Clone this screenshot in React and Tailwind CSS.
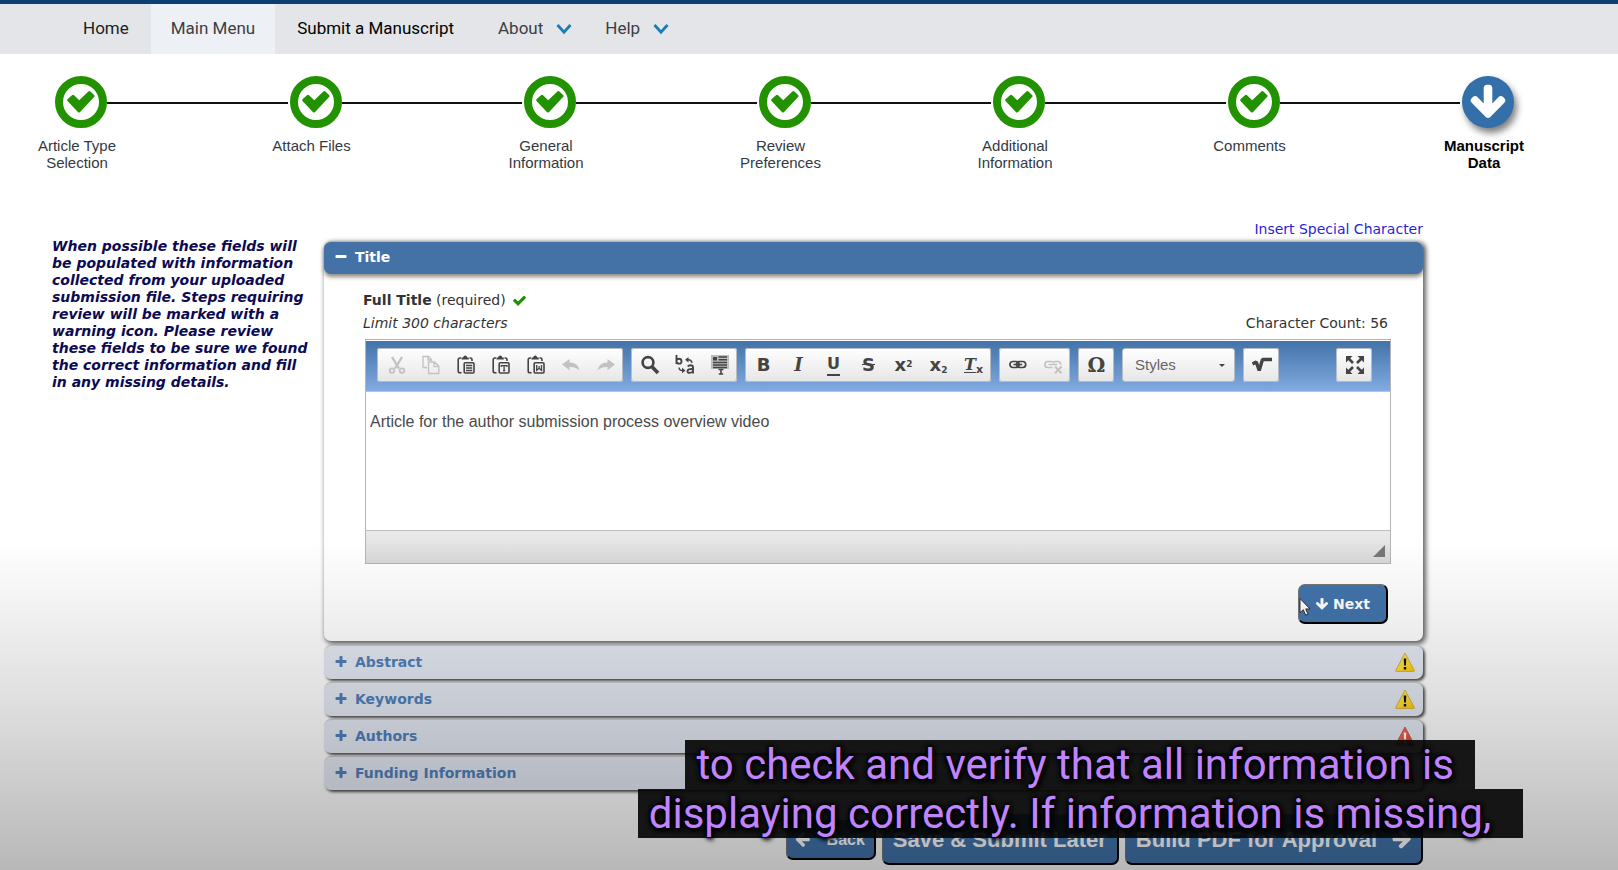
import React from "react";

const CHECK =
  "M1671 566q0 40-28 68l-724 724-136 136q-28 28-68 28t-68-28l-136-136-362-362q-28-28-28-68t28-68l136-136q28-28 68-28t68 28l294 295 656-657q28-28 68-28t68 28l136 136q28 28 28 68z";
const ARROW =
  "M1675 832q0 53-37 90l-651 652q-39 37-91 37-53 0-90-37l-651-652q-38-36-38-90 0-53 38-91l74-75q39-37 91-37 53 0 90 37l294 294v-704q0-52 38-90t90-38h128q52 0 90 38t38 90v704l294-294q37-37 90-37 52 0 91 37l75 75q37 39 37 91z";
const PLUS =
  "M1600 736v192q0 40-28 68t-68 28h-416v416q0 40-28 68t-68 28h-192q-40 0-68-28t-28-68v-416h-416q-40 0-68-28t-28-68v-192q0-40 28-68t68-28h416v-416q0-40 28-68t68-28h192q40 0 68 28t28 68v416h416q40 0 68 28t28 68z";
const MINUS =
  "M1600 736v192q0 40-28 68t-68 28h-1216q-40 0-68-28t-28-68v-192q0-40 28-68t68-28h1216q40 0 68 28t28 68z";

function Glyph({ d, className }) {
  return (
    <svg viewBox="0 0 1792 1792" fill="currentColor" className={className} aria-hidden="true">
      <path d={d} />
    </svg>
  );
}

const steps = [
  ["Article Type", "Selection"],
  ["Attach Files"],
  ["General", "Information"],
  ["Review", "Preferences"],
  ["Additional", "Information"],
  ["Comments"],
  ["Manuscript", "Data"],
];

function Chevron() {
  return (
    <svg viewBox="0 0 16 12" className="h-3 w-4" fill="none" stroke="#1a7bb5" strokeWidth="2.8" aria-hidden="true">
      <path d="M1.5 2 8 9.2 14.5 2" />
    </svg>
  );
}

function Nav() {
  return (
    <nav className="flex h-[54px] items-stretch border-t-4 border-[#0b3f73] bg-[#e3e5e8] pl-[59px] font-['Roboto',sans-serif] text-[17px] text-[#26282b]">
      <a href="#home" className="flex items-center pr-[22px] pl-6 text-[#1c1d1f]">Home</a>
      <a href="#main" className="flex items-center bg-[#edf1f5] px-5 text-[#3c3e42]">Main Menu</a>
      <a href="#submit" className="flex items-center px-[22px] text-black">Submit a Manuscript</a>
      <a href="#about" className="flex items-center gap-[13px] px-[22px] text-[#3c3e42]">About <Chevron /></a>
      <a href="#help" className="flex items-center gap-[13px] pl-[11px] text-[#3c3e42]">Help <Chevron /></a>
    </nav>
  );
}

function Stepper() {
  return (
    <ol className="flex pt-[22px] pr-[104px] pl-[55px]">
      {steps.map((lines, i) => {
        const current = i === steps.length - 1;
        return (
          <li key={lines[0]} className={current ? "w-[52px] flex-none" : "min-w-0 flex-1"}>
            <div className="flex items-center">
              {current ? (
                <span className="flex size-[52px] flex-none items-center justify-center rounded-full bg-[#336fa8] text-white shadow-[3px_5px_7px_rgba(0,0,0,0.5)]">
                  <Glyph d={ARROW} className="size-10" />
                </span>
              ) : (
                <span className="flex size-[52px] flex-none items-center justify-center rounded-full border-8 border-[#229200] text-[#229200]">
                  <svg viewBox="0 0 28 22" className="h-[22px] w-7 flex-none" fill="currentColor" stroke="currentColor" strokeWidth="3" strokeLinejoin="round" aria-hidden="true">
                    <path d="M6 5.300 1.800 9.200 12 20 26 5 22.400 1.600 12.200 11.400Z" />
                  </svg>
                </span>
              )}
              {!current && <span className="mt-[2px] mr-[2px] h-[2px] flex-1 bg-[#111]" />}
            </div>
            <p
              className={`mt-[9px] -ml-[38px] h-[34px] w-[120px] text-center font-['Liberation_Sans',sans-serif] text-[15px] leading-[17px] ${
                current ? "font-bold text-black" : "text-[#333a44]"
              }`}
            >
              {lines.map((l) => (
                <span key={l} className="block">{l}</span>
              ))}
            </p>
          </li>
        );
      })}
    </ol>
  );
}

/* ---------- toolbar icons ---------- */

function Icon({ children, dim }) {
  return (
    <svg viewBox="0 0 20 20" className={`size-5 ${dim ? "text-[#c2c2c2]" : "text-[#444]"}`} fill="none" stroke="currentColor" strokeWidth="1.6" aria-hidden="true">
      {children}
    </svg>
  );
}

function Clipboard({ children }) {
  return (
    <Icon>
      <path d="M5 3H4Q2.200 3 2.200 5V16Q2.200 17.800 4 17.800H5.500M13.500 3H14.500Q16 3 16 5V6" />
      <path d="M5.500 4.500V2.500H7.200Q7.400.6 9.200.6T11.200 2.500H12.800V4.500Z" fill="currentColor" stroke="none" />
      <rect x="8.200" y="7.800" width="9.800" height="10.200" rx="1" />
      {children}
    </Icon>
  );
}

const Cut = () => (
  <Icon dim>
    <path d="M6 2 13 13.500M16 2 9 13.500" strokeWidth="2.400" />
    <circle cx="6" cy="15.600" r="2.300" strokeWidth="1.800" />
    <circle cx="16" cy="15.600" r="2.300" strokeWidth="1.800" />
  </Icon>
);
const Copy = () => (
  <Icon dim>
    <path d="M6 12.500H2V1.500H7.500L10.500 4.500V6M7 1.500V5H10" strokeWidth="1.300" />
    <path d="M7.500 7H13.500L17.800 11V18.500H7.500ZM13 7V11.500H17.500" strokeWidth="1.300" />
  </Icon>
);
const Paste = () => (
  <Clipboard>
    <path d="M10 10.500H16.200M10 13H16.200M10 15.500H16.200" strokeWidth="1.300" />
  </Clipboard>
);
const PasteText = () => (
  <Clipboard>
    <path d="M10.300 11.900V10.600H16V11.900M13.100 10.600V15.700M12 15.700H14.300" strokeWidth="1.300" />
  </Clipboard>
);
const PasteWord = () => (
  <Clipboard>
    <path d="M10.700 10V15.300L13.100 13.300 15.500 15.300V10M13.100 11V13.500" strokeWidth="1.300" />
  </Clipboard>
);
const Undo = () => (
  <Icon dim>
    <path d="M1 9.500 8.500 4V7.500Q17 7.500 18.500 15.500 14.500 11.500 8.500 12V15.200Z" fill="currentColor" stroke="none" />
  </Icon>
);
const Redo = () => (
  <Icon dim>
    <path d="M19 9.500 11.500 4V7.500Q3 7.500 1.500 15.500 5.500 11.500 11.500 12V15.200Z" fill="currentColor" stroke="none" />
  </Icon>
);
const Find = () => (
  <Icon>
    <circle cx="8" cy="7.500" r="5.400" strokeWidth="2.600" />
    <path d="M12 11.800 18 18" strokeWidth="3.600" />
  </Icon>
);
const Replace = () => (
  <Icon>
    <path d="M1.500 0V9M1.500 5.500Q2 3.700 4.200 3.700T6.500 6.200 4.200 8.600 1.500 7M12.800 11.500Q13.500 10.300 15.500 10.300 18 10.300 18 12.500V18.500M18 14Q12.500 13.600 12.500 16.200 12.500 18 14.700 17.900 17.300 17.700 18 16" strokeWidth="1.900" />
    <path d="M17 8Q16.500 4.500 13 4.700M4 12.500Q4 15.500 7.500 15.500" strokeWidth="1.400" />
    <path d="M10 4.700 13.500 2V7.400ZM10.500 15.500 7 12.800V18.200Z" fill="currentColor" stroke="none" />
  </Icon>
);
const SelectAll = () => (
  <Icon>
    <path d="M1 0H19V14H1Z" fill="#bdbdbd" stroke="none" />
    <path d="M3 2.800H7M8.500 2H17M8.500 4.800H17M3 7.500H17M3 10H17M3 12.600H17" strokeWidth="1.500" />
    <path d="M3 2H7V5.500H3Z" fill="currentColor" stroke="none" />
    <path d="M8.500 14.500H13.500M11 14.500V19M8.800 19H13.200" strokeWidth="1.600" />
  </Icon>
);
const Link = () => (
  <Icon>
    <rect x="1.900" y="6.500" width="9.200" height="6" rx="3" strokeWidth="1.700" />
    <rect x="8.500" y="6.500" width="9.200" height="6" rx="3" strokeWidth="1.700" />
    <path d="M5.500 9.500H14.200" strokeWidth="1.500" />
  </Icon>
);
const Unlink = () => (
  <Icon dim>
    <path d="M11 6.500H14.500Q17.700 6.500 17.700 9.500M9.500 12.500H5Q1.900 12.500 1.900 9.500T5 6.500H8.200Q10 6.500 11 8M5.500 9.500H14.200" strokeWidth="1.700" />
    <path d="M12 11.500 18.500 18.200M18.500 11.500 12 18.200" strokeWidth="2" />
  </Icon>
);
const Root = () => (
  <Icon>
    <path d="M.5 9 4.300 7 7.200 15.500 10.500 4.500H20" strokeWidth="3.400" strokeLinejoin="bevel" />
  </Icon>
);
const Maximize = () => (
  <Icon>
    <path d="M3 3 8 8M17 3 12 8M3 17 8 12M17 17 12 12" strokeWidth="2.600" />
    <path d="M1 1H7.500L1 7.500ZM19 1H12.500L19 7.500ZM1 19H7.500L1 12.500ZM19 19H12.500L19 12.500Z" fill="currentColor" stroke="none" />
  </Icon>
);

const Letter = ({ className, children }) => (
  <span className={`leading-5 text-[#444] ${className}`}>{children}</span>
);

function Group({ items, className = "" }) {
  return (
    <div className={`flex h-[34px] rounded-[3px] bg-linear-to-b from-white to-[#e6e6e6] pl-px inset-ring inset-ring-[#b6bcc4] ${className}`}>
      {items.map(([name, node]) => (
        <button key={name} type="button" aria-label={name} title={name} className="flex w-[35px] items-center justify-center">
          {node}
        </button>
      ))}
    </div>
  );
}

function Toolbar() {
  return (
    <div className="flex h-[51px] gap-2 border-b border-[#b9c3cf] bg-linear-to-b from-[#4273a9] to-[#82abe0] pt-[7px] pr-[18px] pl-[11px]">
      <Group
        items={[
          ["Cut", <Cut />],
          ["Copy", <Copy />],
          ["Paste", <Paste />],
          ["Paste as plain text", <PasteText />],
          ["Paste from Word", <PasteWord />],
          ["Undo", <Undo />],
          ["Redo", <Redo />],
        ]}
      />
      <Group items={[["Find", <Find />], ["Replace", <Replace />], ["Select all", <SelectAll />]]} />
      <Group
        items={[
          ["Bold", <Letter className="font-['DejaVu_Sans',sans-serif] text-lg font-bold">B</Letter>],
          ["Italic", <Letter className="font-['DejaVu_Serif',serif] text-lg font-bold italic">I</Letter>],
          ["Underline", <Letter className="border-b-2 border-[#444] font-['DejaVu_Sans',sans-serif] text-base leading-4 font-bold">U</Letter>],
          ["Strikethrough", <Letter className="font-['DejaVu_Sans',sans-serif] text-lg font-bold line-through">S</Letter>],
          ["Superscript", <Letter className="font-['DejaVu_Sans',sans-serif] text-lg font-bold">x<sup className="text-[9px]">2</sup></Letter>],
          ["Subscript", <Letter className="font-['DejaVu_Sans',sans-serif] text-lg font-bold">x<sub className="text-[9px]">2</sub></Letter>],
          ["Remove format", <Letter className="font-['DejaVu_Serif',serif] text-base font-bold"><i className="underline underline-offset-2">T</i><sub className="font-['DejaVu_Sans',sans-serif] text-[11px]">x</sub></Letter>],
        ]}
      />
      <Group items={[["Link", <Link />], ["Unlink", <Unlink />]]} />
      <Group items={[["Special character", <Letter className="font-['DejaVu_Serif',serif] text-xl font-bold">Ω</Letter>]]} />
      <div className="relative h-[34px] w-[113px]">
        <select
          aria-label="Styles"
          className="h-full w-full appearance-none rounded-[3px] border border-[#b6bcc4] bg-linear-to-b from-white to-[#e6e6e6] px-3 font-['Liberation_Sans',sans-serif] text-[15px] text-[#666]"
        >
          <option>Styles</option>
        </select>
        <svg viewBox="0 0 6 3" className="pointer-events-none absolute top-4 right-[10px] h-[3px] w-[6px]" fill="#444" aria-hidden="true">
          <path d="M0 0H6L3 3Z" />
        </svg>
      </div>
      <Group items={[["Equation", <Root />]]} />
      <Group className="ml-auto" items={[["Maximize", <Maximize />]]} />
    </div>
  );
}

function Warning({ red }) {
  return (
    <svg viewBox="0 0 20 20" className="size-5" role="img" aria-label={red ? "Error" : "Warning"}>
      <defs>
        <linearGradient id={red ? "wr" : "wy"} x1="0" y1="0" x2="1" y2="1">
          <stop offset="0" stopColor={red ? "#ff7d68" : "#fff47a"} />
          <stop offset="1" stopColor={red ? "#de3a24" : "#fccc00"} />
        </linearGradient>
      </defs>
      <path d="M10 1 19.300 18.600Q19.600 19.400 18.800 19.400H1.200Q.4 19.400.7 18.600Z" fill={red ? "url(#wr)" : "url(#wy)"} stroke={red ? "#c8503f" : "#d9a92a"} strokeWidth=".9" strokeLinejoin="round" />
      <path d="M8.700 6.500H11.300L10.900 13.500H9.100ZM8.800 15H11.200V17.400H8.800Z" fill={red ? "#fff" : "#111"} />
    </svg>
  );
}

const sections = [
  ["Abstract", "yellow"],
  ["Keywords", "yellow"],
  ["Authors", "red"],
  ["Funding Information", "red"],
];

const action =
  "flex items-center border border-t-[#777] border-l-[#777] border-r-2 border-b-2 border-r-black border-b-black bg-[#4274ab] rounded-[7px] font-bold text-white";

function TitlePanel() {
  return (
    <div className="rounded-[7px] bg-white shadow-[2px_2px_5px_1px_rgba(0,0,0,0.6)]">
      <button
        type="button"
        className="flex h-[33px] w-full items-center gap-[7px] rounded-[7px] border-t border-[#b9b4a4] bg-[#4471a6] pb-[2px] pl-[10px] text-sm font-bold text-white shadow-[0_3px_4px_rgba(80,75,60,0.65)]"
      >
        <Glyph d={MINUS} className="size-[14px]" />
        Title
      </button>
      <div className="pt-4 pr-8 pb-[17px] pl-[39px] text-sm leading-5 text-[#333]">
        <div className="flex items-center gap-[6px]">
          <label htmlFor="full-title"><b>Full Title</b> (required)</label>
          <Glyph d={CHECK} className="size-[15px] text-[#1c9200]" />
        </div>
        <div className="mt-[3px] flex justify-between pr-[3px]">
          <i>Limit 300 characters</i>
          <span>Character Count: 56</span>
        </div>
        <div className="mt-[6px] ml-[2px] border border-[#b4b4b4] bg-white pt-px">
          <Toolbar />
          <textarea
            id="full-title"
            className="block h-[138px] w-full resize-none px-1 pt-5 font-['Liberation_Sans',sans-serif] text-base leading-5 text-[#4a4a4a] outline-none"
            defaultValue="Article for the author submission process overview video"
          />
          <div className="flex h-[33px] items-end justify-end border-t border-[#bbb] bg-linear-to-b from-[#ebebeb] to-[#d8d8d8] pr-[5px] pb-[6px]">
            <svg viewBox="0 0 12 12" className="size-3" fill="#777" aria-hidden="true">
              <path d="M12 0V12H0Z" />
            </svg>
          </div>
        </div>
        <div className="mt-5 flex justify-end pr-[3px]">
          <button type="button" className={`${action} h-10 gap-1 pr-4 pl-4 text-sm`}>
            <Glyph d={ARROW} className="size-[14px]" />
            Next
          </button>
        </div>
      </div>
    </div>
  );
}

export default function App() {
  return (
    <div className="relative min-h-screen overflow-hidden bg-white font-['DejaVu_Sans',sans-serif]">
      <Nav />
      <Stepper />
      <main className="flex pt-12 pr-[195px] pl-[52px]">
        <aside className="w-[272px] flex-none pt-[19px] text-sm leading-[17px] font-bold text-[#0c0a52] italic">
          When possible these fields will<br />
          be populated with information<br />
          collected from your uploaded<br />
          submission file. Steps requiring<br />
          review will be marked with a<br />
          warning icon. Please review<br />
          these fields to be sure we found<br />
          the correct information and fill<br />
          in any missing details.
        </aside>
        <section className="min-w-0 flex-1">
          <div className="mb-[2px] flex justify-end text-sm leading-5">
            <a href="#special" className="text-[#2a1fd6]">Insert Special Character</a>
          </div>
          <TitlePanel />
          <div className="mt-1 flex flex-col gap-[3px]">
            {sections.map(([name, tone]) => (
              <button
                key={name}
                type="button"
                className="flex h-[34px] items-center gap-[7px] rounded-[7px] border-t border-[#c9c9c9] bg-[#e4e9f3] pr-2 pb-px pl-[10px] text-sm font-bold text-[#5080bb] shadow-[2px_2px_3px_rgba(0,0,0,0.7)]"
              >
                <Glyph d={PLUS} className="size-[14px]" />
                {name}
                <span className="ml-auto"><Warning red={tone === "red"} /></span>
              </button>
            ))}
          </div>
          <div className="flex justify-end gap-[6px] pt-6 font-['Liberation_Sans',sans-serif]">
            <button type="button" className={`${action} mt-[6px] h-10 gap-4 self-start pr-[9px] pl-[7px] text-base`}>
              <Glyph d={ARROW} className="size-[17px] rotate-90" />
              Back
            </button>
            <button type="button" className={`${action} h-[51px] px-[10px] text-[22px]`}>Save &amp; Submit Later</button>
            <button type="button" className={`${action} h-[51px] gap-[14px] pr-2 pl-[10px] text-[22px]`}>
              Build PDF for Approval
              <Glyph d={ARROW} className="size-[22px] -rotate-90" />
            </button>
          </div>
        </section>
      </main>

      {/* mouse pointer */}
      <svg viewBox="0 0 12 19" className="absolute top-[597px] left-[1299px] h-[20px] w-[12px]" aria-hidden="true">
        <path d="M1 1V15.200L4.300 12.200 6.600 17.600 9 16.600 6.700 11.400H11Z" fill="#fff" stroke="#222" strokeWidth=".9" />
      </svg>

      {/* player shade and captions */}
      <div className="pointer-events-none absolute inset-x-0 bottom-0 h-[330px] bg-linear-to-t from-black/28 via-black/13 to-transparent" />
      <div className="absolute right-[95px] bottom-8 flex flex-col items-center font-['Roboto',sans-serif] text-[42px] leading-[49px] whitespace-pre text-[#c184ff] [text-shadow:0_0_4px_#000,0_0_4px_#000,0_0_5px_#000,2px_3px_5px_#000]">
        <span className="bg-[#080808]/93 px-[11px]">{"to check and verify that all information is "}</span>
        <span className="bg-[#080808]/93 px-[11px]">{"displaying correctly. If information is missing,  "}</span>
      </div>
    </div>
  );
}
